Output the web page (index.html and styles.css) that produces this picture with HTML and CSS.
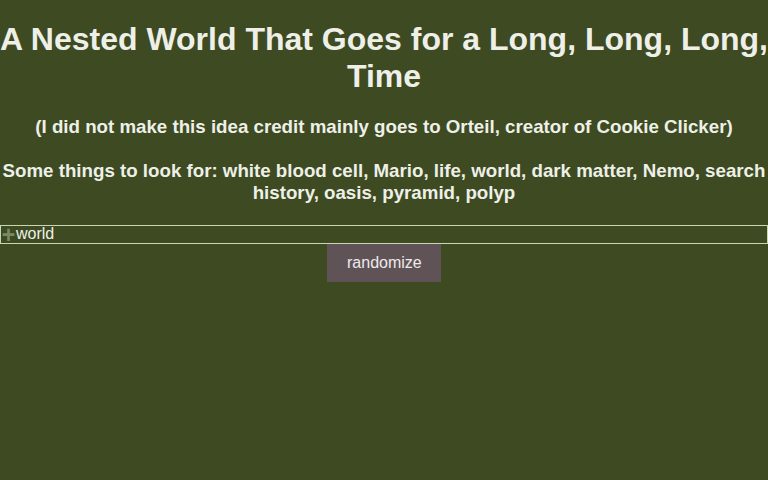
FILE: index.html
```html
<!DOCTYPE html>
<html>
<head>
<meta charset="utf-8">
<link rel="stylesheet" href="styles.css">
</head>
<body>
<h1 class="title">A Nested World That Goes for a Long, Long, Long, Time</h1>
<h3 class="credit">(I did not make this idea credit mainly goes to Orteil, creator of Cookie Clicker)</h3>
<h3 class="hints">Some things to look for: white blood cell, Mario, life, world, dark matter, Nemo, search history, oasis, pyramid, polyp</h3>
<div class="things">
  <div class="thing"><span class="toggle">+</span><span class="name">world</span></div>
</div>
<div class="actions"><button class="randomize">randomize</button></div>
</body>
</html>
```
FILE: styles.css
```css
html, body {
  margin: 0;
  background: #3d4a22;
  color: #eef0e8;
  font-family: "Liberation Sans", Arial, sans-serif;
}
.title {
  font-size: 32px;
  text-align: center;
  margin: 21px 0;
  line-height: 37px;
}
.credit, .hints {
  font-size: 18.72px;
  text-align: center;
  line-height: 22px;
  margin: 0;
}
.credit { margin-top: 21px; }
.hints { margin-top: 22px; }
.things { margin-top: 21px; }
.thing {
  border: 1px solid #c8d6b4;
  height: 17px;
  display: flex;
  align-items: center;
  font-size: 16px;
  line-height: 16px;
}
.toggle {
  color: #7b8a64;
  font-size: 23px;
  line-height: 16px;
  font-weight: bold;
  width: 15px;
  text-align: center;
}
.name { margin-top: -2px; }
.actions {
  display: flex;
  justify-content: center;
}
.randomize {
  background: #5f5358;
  color: #eeeaea;
  border: none;
  font-family: "Liberation Sans", Arial, sans-serif;
  font-size: 16px;
  padding: 10px 20px;
  height: 38px;
  width: 114px;
}
```
